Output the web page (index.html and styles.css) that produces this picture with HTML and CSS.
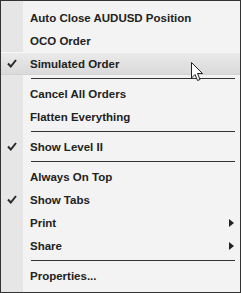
FILE: index.html
```html
<!DOCTYPE html>
<html lang="en">
<head>
    <meta charset="UTF-8">
    <title>Context Menu</title>
    <link rel="stylesheet" href="styles.css">
</head>
<body>
    <div class="menu">
        <div class="item"><span class="mark"></span><span class="label">Auto Close AUDUSD Position</span></div>
        <div class="item"><span class="mark"></span><span class="label">OCO Order</span></div>
        <div class="item hover">
            <span class="mark">
                <svg width="10" height="9" viewBox="0 0 10 9"><path d="M1 4.5 L3.8 7.5 L9 1" fill="none" stroke="#2a2a2a" stroke-width="2"/></svg>
            </span>
            <span class="label">Simulated Order</span>
        </div>
        <div class="sep"></div>
        <div class="item"><span class="mark"></span><span class="label">Cancel All Orders</span></div>
        <div class="item"><span class="mark"></span><span class="label">Flatten Everything</span></div>
        <div class="sep"></div>
        <div class="item">
            <span class="mark">
                <svg width="10" height="9" viewBox="0 0 10 9"><path d="M1 4.5 L3.8 7.5 L9 1" fill="none" stroke="#2a2a2a" stroke-width="2"/></svg>
            </span>
            <span class="label">Show Level II</span>
        </div>
        <div class="sep"></div>
        <div class="item"><span class="mark"></span><span class="label">Always On Top</span></div>
        <div class="item">
            <span class="mark">
                <svg width="10" height="9" viewBox="0 0 10 9"><path d="M1 4.5 L3.8 7.5 L9 1" fill="none" stroke="#2a2a2a" stroke-width="2"/></svg>
            </span>
            <span class="label">Show Tabs</span>
        </div>
        <div class="item"><span class="mark"></span><span class="label">Print</span><span class="arrow"></span></div>
        <div class="item"><span class="mark"></span><span class="label">Share</span><span class="arrow"></span></div>
        <div class="sep"></div>
        <div class="item"><span class="mark"></span><span class="label">Properties...</span></div>

        <!-- mouse pointer over the hovered row -->
        <svg class="cursor" width="13" height="20" viewBox="0 0 13 20">
            <path d="M0.5 0.5 L0.5 16 L4 12.5 L6.5 18.5 L9 17.5 L6.5 11.5 L11.5 11.5 Z" fill="#fff" stroke="#222" stroke-width="1"/>
        </svg>
    </div>
</body>
</html>
```

FILE: styles.css
```css
body {
    margin: 0;
    font-family: 'Liberation Sans', Arial, sans-serif;
}
.menu {
    position: relative;
    box-sizing: border-box;
    width: 241px;
    height: 293px;
    padding: 5px 0;
    border: 1px solid #333;
    background: linear-gradient(to right, #e6e6e6 22px, #f3f3f3 22px);
}
.item {
    display: flex;
    align-items: center;
    height: 23px;
    font-size: 11.5px;
    font-weight: bold;
    color: #222;
}
.item.hover {
    background: linear-gradient(#ebebeb, #d9d9d9);
    box-shadow: inset 0 1px 0 #f7f7f7, inset 0 -1px 0 #d2d2d2;
}
.mark {
    display: flex;
    justify-content: center;
    align-items: center;
    width: 22px;
    margin-right: 7px;
}
.arrow {
    margin-left: auto;
    margin-right: 6px;
    width: 0;
    height: 0;
    border-top: 4px solid transparent;
    border-bottom: 4px solid transparent;
    border-left: 5px solid #222;
}
.sep {
    height: 1px;
    margin: 3px 5px 3px 30px;
    background: #333;
}
.cursor {
    position: absolute;
    left: 190px;
    top: 61px;
}
```
